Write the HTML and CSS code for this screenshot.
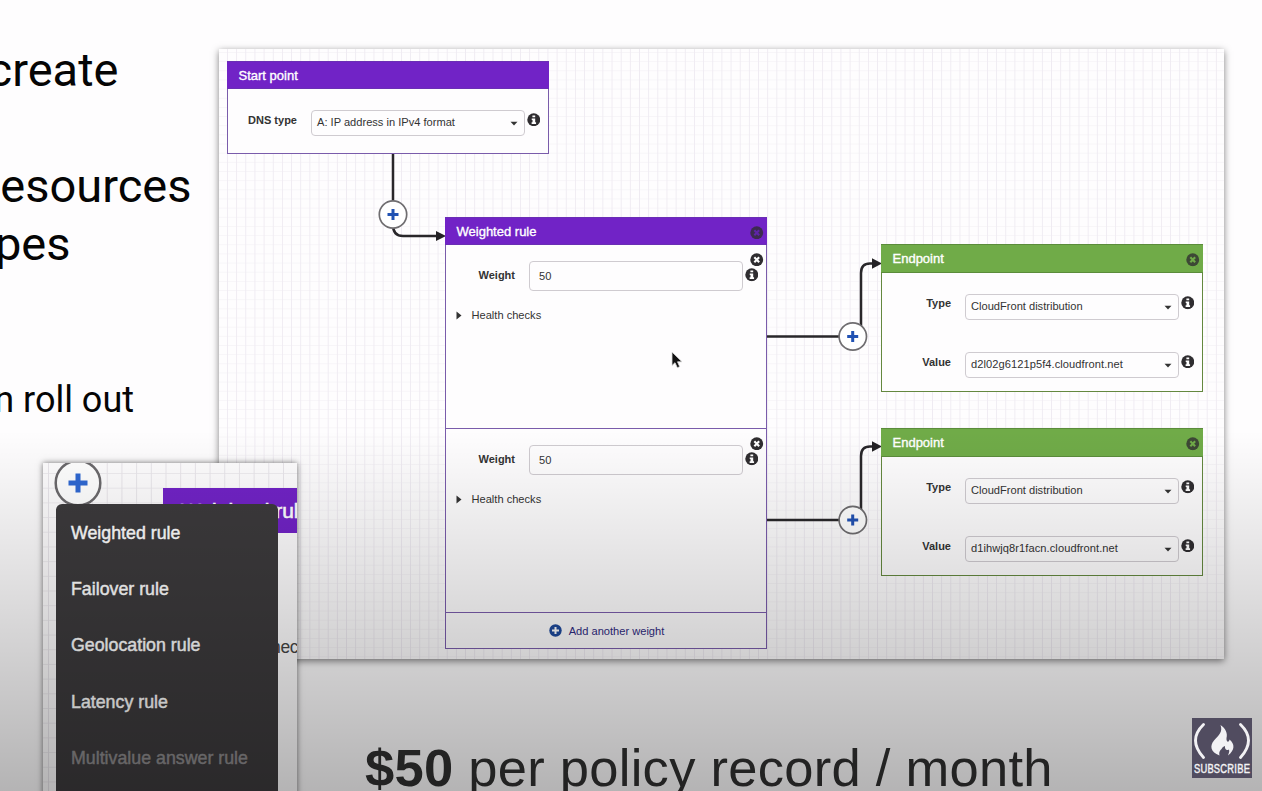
FILE: index.html
```html
<!DOCTYPE html>
<html lang="en">
<head>
<meta charset="utf-8">
<title>Traffic policy</title>
<link rel="stylesheet" href="styles.css">
</head>
<body>
<svg class="defs" width="0" height="0" aria-hidden="true">
  <symbol id="info" viewBox="0 0 14 14"><circle cx="7" cy="7" r="6.700" fill="#2f2d30"/><path d="M5.600 2.500h2.900v2H5.600zM4.900 5.600h3.600v4h.9v1.700H4.800V9.600h.9V7.200h-.8z" fill="#fff"/></symbol>
  <symbol id="close" viewBox="0 0 14 14"><circle cx="7" cy="7" r="6.700" fill="#2f2d30"/><path d="M4.500 4.500l5 5M9.500 4.500l-5 5" stroke="var(--x,#fff)" stroke-width="2.200"/></symbol>
  <symbol id="arrow" viewBox="0 0 8 5"><path d="M.5.700h7L4 4.500z" fill="#333"/></symbol>
  <symbol id="tri" viewBox="0 0 6 9"><path d="M.5.500v8L5.500 4.500z" fill="#333"/></symbol>
</svg>
<main class="slide">
  <p class="line create">create</p>
  <p class="line resources">esources</p>
  <p class="line types">pes</p>
  <p class="line rollout">n roll out</p>

  <section class="canvas"></section>

  <svg class="wires" width="1262" height="791" viewBox="0 0 1262 791">
    <g fill="none" stroke="#29272a" stroke-width="2.500">
      <path d="M393 153V225Q393 236 403 236H437"/>
      <path d="M767 336.500H852M861 330V273Q861 263.500 870 263.500H873"/>
      <path d="M767 520H852M861 513V456Q861 446.500 870 446.500H873"/>
    </g>
    <g fill="#242225"><path d="M436 231l10 5-10 5zM872 258.300l10 5.200-10 5.200zM872 441.300l10 5.200-10 5.200z"/></g>
    <g fill="#fff" stroke="#6f6d70" stroke-width="1.700"><circle cx="393" cy="214.500" r="13.700"/><circle cx="852.800" cy="336.500" r="13.700"/><circle cx="852.800" cy="520" r="13.700"/></g>
    <path d="M387.500 214.500h11M393 209v11M847.200 336.500h11M852.700 331v11M847.200 520h11M852.700 514.500v11" stroke="#2152b3" stroke-width="3"/>
  </svg>

  <article class="node start">
    <h2 class="head">Start point</h2>
    <div class="row"><b class="label">DNS type</b><span class="select">A: IP address in IPv4 format<svg class="caret"><use href="#arrow"/></svg></span><svg class="ico"><use href="#info"/></svg></div>
  </article>

  <article class="node rule">
    <h2 class="head">Weighted rule<svg class="ico shut"><use href="#close"/></svg></h2>
    <div class="part">
      <svg class="ico remove"><use href="#close"/></svg>
      <div class="row"><b class="label">Weight</b><span class="input">50</span><svg class="ico"><use href="#info"/></svg></div>
      <p class="health"><svg class="tri"><use href="#tri"/></svg>Health checks</p>
    </div>
    <div class="part">
      <svg class="ico remove"><use href="#close"/></svg>
      <div class="row"><b class="label">Weight</b><span class="input">50</span><svg class="ico"><use href="#info"/></svg></div>
      <p class="health"><svg class="tri"><use href="#tri"/></svg>Health checks</p>
    </div>
    <div class="add"><svg width="13" height="13" viewBox="0 0 13 13"><circle cx="6.500" cy="6.500" r="6.200" fill="#1f4a9c"/><path d="M3 6.500h7M6.500 3v7" stroke="#fff" stroke-width="2"/></svg>Add another weight</div>
  </article>

  <article class="node end first">
    <h2 class="head">Endpoint<svg class="ico shut"><use href="#close"/></svg></h2>
    <div class="row"><b class="label">Type</b><span class="select">CloudFront distribution<svg class="caret"><use href="#arrow"/></svg></span><svg class="ico"><use href="#info"/></svg></div>
    <div class="row"><b class="label">Value</b><span class="select host">d2l02g6121p5f4.cloudfront.net<svg class="caret"><use href="#arrow"/></svg></span><svg class="ico"><use href="#info"/></svg></div>
  </article>
  <article class="node end second">
    <h2 class="head">Endpoint<svg class="ico shut"><use href="#close"/></svg></h2>
    <div class="row"><b class="label">Type</b><span class="select">CloudFront distribution<svg class="caret"><use href="#arrow"/></svg></span><svg class="ico"><use href="#info"/></svg></div>
    <div class="row"><b class="label">Value</b><span class="select host">d1ihwjq8r1facn.cloudfront.net<svg class="caret"><use href="#arrow"/></svg></span><svg class="ico"><use href="#info"/></svg></div>
  </article>

  <svg class="cursor" width="12" height="18" viewBox="0 0 12 18"><path d="M1 1v13.500l3-2.800 2.300 5 2.400-1-2.200-4.900H11z" fill="#111" stroke="#ddd" stroke-width=".8"/></svg>

  <p class="price"><b>$50</b> per policy record / month</p>

  <section class="inset">
    <div class="inset-node"><div class="inset-head">Weighted rule</div></div>
    <p class="inset-checks">hec</p>
    <svg class="plus" width="48" height="48" viewBox="0 0 48 48"><circle cx="24" cy="24" r="22.300" fill="#fff" stroke="#6b696c" stroke-width="2.500"/><path d="M14.500 24h19M24 14.500v19" stroke="#2f68d2" stroke-width="5"/></svg>
    <ul class="menu"><li>Weighted rule</li><li>Failover rule</li><li>Geolocation rule</li><li>Latency rule</li><li class="off">Multivalue answer rule</li></ul>
  </section>

  <div class="shade"></div>

  <div class="badge">
    <svg width="60" height="42" viewBox="0 0 60 42"><path d="M11.500 6.500Q-4.500 22 11.500 39.500M48.500 6.500Q64.500 22 48.500 39.500" fill="none" stroke="#f2f1f4" stroke-width="2.800" stroke-linecap="round"/><path d="M28.500 7C33 10 36 15 34.500 20C34 24 37 25 37.500 21.500C43 26 43 32 36 37.500C37 34.500 38 32.500 36.500 31.500C35 33 32.500 31.500 33 28C29.500 29 30.500 31 28.500 32C27 34 27 35.500 27.500 37.500C18.500 34 17.500 28 22 22.500C27 17 31 14 28.500 7z" fill="#f2f1f4"/></svg>
    <span>SUBSCRIBE</span>
  </div>
</main>
</body>
</html>
```

FILE: styles.css
```css
* { box-sizing: border-box; }
body { margin: 0; background: #fefdfe; font-family: "Liberation Sans", Arial, sans-serif; color: #333; }
h2, p, ul { margin: 0; padding: 0; }
svg { display: block; flex: none; }
.defs { position: absolute; }
.slide { position: relative; width: 1262px; height: 791px; overflow: hidden; }

.line { position: absolute; left: 0; display: flex; justify-content: flex-end; white-space: nowrap; color: #050505; font: 47px/56px Roboto, sans-serif; }
.create { top: 42px; width: 118.500px; }
.resources { top: 158px; width: 191.500px; }
.types { top: 216px; width: 70.500px; }
.rollout { top: 380px; width: 134px; font-size: 36px; line-height: 40px; }

.canvas {
  position: absolute; left: 219px; top: 49px; width: 1005px; height: 610px; background-color: #fefdfe;
  background-image: linear-gradient(90deg, #efebf2 1px, transparent 1px), linear-gradient(#f7f5f8 1px, transparent 1px);
  background-size: 9.170px 9.170px; background-position: 8px 3px;
  box-shadow: 0 2px 7px rgba(0, 0, 0, .5);
}
.wires { position: absolute; left: 0; top: 0; }

.node { position: absolute; width: 322px; background: #fefdfe; border: 1px solid #7a5cab; font-size: 11.100px; }
.start { left: 227px; top: 61px; height: 93px; }
.rule { left: 445px; top: 217px; height: 432px; }
.end { left: 881px; height: 148px; border-color: #64883f; }
.first { top: 244px; }
.second { top: 428px; }

.head { display: flex; align-items: center; justify-content: space-between; height: 28px; margin: -1px -1px 0; padding: 0 3.500px 0 11.500px; background: #7123c6; border: 1px solid #6a2fb4; border-width: 1px 0; color: #fff; font-size: 13px; font-weight: 400; -webkit-text-stroke: .35px #fff; }
.end .head { background: #70ab48; border-color: #5b8c3b; height: 29px; }
.ico { width: 13.500px; height: 13.500px; }
.shut { opacity: .78; --x: #5a25a0; margin-top: 3px; }
.end .shut { --x: #70ab48; }

.row { display: flex; align-items: flex-start; height: 58.500px; }
.label { width: 69px; margin: 4px 14px 0 0; font-size: 11px; line-height: 13px; text-align: right; }
.select, .input { display: flex; align-items: center; justify-content: space-between; width: 214px; height: 26px; padding: 0 6px 2px 5px; border: 1px solid #cfcbd0; border-radius: 4px; margin-right: 1.500px; white-space: nowrap; }
.host { letter-spacing: .07px; }
.caret { width: 8px; height: 5px; margin-top: 3px; }
.row .ico { margin-top: 2.500px; }
.start .row { margin-top: 21px; }
.end .head + .row { margin-top: 20.500px; }
.end .label { margin-top: 3.500px; }

.part { position: relative; height: 184px; border-bottom: 1px solid #7a5cab; padding-top: 16px; }
.part .row { height: 46px; }
.part .input { height: 30px; padding: 0 9px 1px; }
.part .label { margin-top: 8px; }
.part .row .ico { margin-top: 7px; }
.remove { position: absolute; right: 2.500px; top: 7.500px; }
.health { display: flex; align-items: center; gap: 9.500px; height: 16px; padding-left: 10px; }
.part + .part .health { height: 15px; }
.tri { width: 6px; height: 9px; margin-top: 1px; }
.add { display: flex; align-items: center; justify-content: center; gap: 7px; height: 35px; padding-left: 1px; color: #2e2a80; }

.cursor { position: absolute; left: 671px; top: 351px; }
.price { position: absolute; left: 365px; top: 738px; font-size: 52.500px; line-height: 60px; letter-spacing: .27px; color: #303030; white-space: nowrap; }

.inset {
  position: absolute; left: 43px; top: 463px; width: 254px; height: 340px; overflow: hidden; background-color: #fefdfe;
  background-image: linear-gradient(90deg, #e9e6eb 1px, transparent 1px), linear-gradient(#efedf0 1px, transparent 1px);
  background-size: 14.700px 14.700px; background-position: 5px 10px;
  box-shadow: 0 0 6px rgba(0, 0, 0, .55);
}
.inset-node { position: absolute; left: 120px; top: 25px; width: 140px; height: 320px; background: #fefdfe; }
.inset-head { height: 45px; padding-left: 18px; background: #7123c6; color: #fff; font-size: 21px; line-height: 46px; white-space: nowrap; -webkit-text-stroke: .6px #fff; }
.inset-checks { position: absolute; left: 228px; top: 173px; font-size: 17.500px; line-height: 22px; letter-spacing: -.3px; color: #444; }
.plus { position: absolute; left: 11px; top: -4px; }
.menu { position: absolute; left: 13px; top: 41px; width: 222px; height: 320px; padding: 1px 15px; list-style: none; border-radius: 6px 6px 0 0; background: #3c3a3c; color: #fff; font-size: 17.800px; -webkit-text-stroke: .45px currentColor; }
.menu li { display: flex; align-items: center; height: 56.300px; white-space: nowrap; }
.menu .off { color: #8c8a8c; }

.shade { position: absolute; inset: 430px 0 0; background: linear-gradient(transparent, rgba(0, 0, 0, .13) 46%, rgba(0, 0, 0, .29)); }
.badge { position: absolute; left: 1192px; top: 718px; width: 60px; height: 60px; background: #514c60; color: #f4f3f5; display: flex; flex-direction: column; align-items: center; }
.badge span { font-size: 12px; line-height: 18px; letter-spacing: .3px; transform: scaleX(.78); -webkit-text-stroke: .4px #f4f3f5; }
```
